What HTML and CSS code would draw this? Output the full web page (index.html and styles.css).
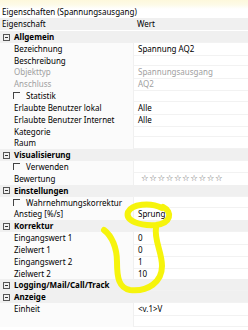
FILE: index.html
```html
<!DOCTYPE html>
<html>
<head>
<meta charset="utf-8">
<link rel="stylesheet" href="styles.css">
</head>
<body>
<div class="panel">
  <div class="title">Eigenschaften (Spannungsausgang)</div>
  <div class="head"><span class="c1">Eigenschaft</span><span class="c2">Wert</span></div>
  <div class="gap"></div>
  <div class="grid">
    <div class="row group"><div class="k"><span class="box"></span>Allgemein</div><div class="v"></div></div>
    <div class="row"><div class="k">Bezeichnung</div><div class="v">Spannung AQ2</div></div>
    <div class="row"><div class="k">Beschreibung</div><div class="v"></div></div>
    <div class="row dis"><div class="k">Objekttyp</div><div class="v">Spannungsausgang</div></div>
    <div class="row dis"><div class="k">Anschluss</div><div class="v">AQ2</div></div>
    <div class="row"><div class="k chk"><span class="cb"></span>Statistik</div><div class="v"></div></div>
    <div class="row"><div class="k">Erlaubte Benutzer lokal</div><div class="v">Alle</div></div>
    <div class="row"><div class="k">Erlaubte Benutzer Internet</div><div class="v">Alle</div></div>
    <div class="row"><div class="k">Kategorie</div><div class="v"></div></div>
    <div class="row"><div class="k">Raum</div><div class="v"></div></div>
    <div class="row group"><div class="k"><span class="box"></span>Visualisierung</div><div class="v"></div></div>
    <div class="row"><div class="k chk"><span class="cb"></span>Verwenden</div><div class="v"></div></div>
    <div class="row"><div class="k">Bewertung</div><div class="v stars">☆☆☆☆☆☆☆☆☆☆</div></div>
    <div class="row group"><div class="k"><span class="box"></span>Einstellungen</div><div class="v"></div></div>
    <div class="row"><div class="k chk"><span class="cb"></span>Wahrnehmungskorrektur</div><div class="v"></div></div>
    <div class="row"><div class="k">Anstieg [%/s]</div><div class="v">Sprung</div></div>
    <div class="row group"><div class="k"><span class="box"></span>Korrektur</div><div class="v"></div></div>
    <div class="row"><div class="k">Eingangswert 1</div><div class="v">0</div></div>
    <div class="row"><div class="k">Zielwert 1</div><div class="v">0</div></div>
    <div class="row"><div class="k">Eingangswert 2</div><div class="v">1</div></div>
    <div class="row"><div class="k">Zielwert 2</div><div class="v">10</div></div>
    <div class="row group"><div class="k"><span class="box"></span>Logging/Mail/Call/Track</div><div class="v"></div></div>
    <div class="row group"><div class="k"><span class="box"></span>Anzeige</div><div class="v"></div></div>
    <div class="row"><div class="k">Einheit</div><div class="v">&lt;v.1&gt;V</div></div>
    <div class="row"><div class="k"></div><div class="v"></div></div>
  </div>
  <svg class="marker" width="248" height="330" viewBox="0 0 248 330">
    <path d="M162 208 C150 202 132 204 128 212 C125 221 140 226 156 225 C171 223 173 212 163 207" fill="none" stroke="#f6f40c" stroke-width="6" stroke-linecap="round"/>
    <path d="M156 228 C154 240 162 252 162 266 C162 282 148 292 130 290 C119 288 117 278 117 262 C117 248 112 236 104 230" fill="none" stroke="#f6f40c" stroke-width="6" stroke-linecap="round"/>
  </svg>
</div>
</body>
</html>
```
FILE: styles.css
```css
html, body {
  margin: 0;
  padding: 0;
  background: #ffffff;
}
.panel {
  position: relative;
  width: 248px;
  height: 330px;
  overflow: hidden;
  font-family: "Noto Sans", "Open Sans", sans-serif;
  font-size: 8px;
  color: #000;
  background: #fff;
}
.title {
  height: 18px;
  line-height: 24px;
  padding-left: 2px;
  background: linear-gradient(#fdf8dc 0, #fdfbe9 5px, #ffffff 9px);
}
.head {
  display: flex;
  height: 12px;
  line-height: 12px;
  background: #f0f0f0;
}
.head .c1 {
  width: 131px;
  padding-left: 2px;
}
.head .c2 {
  padding-left: 4px;
}
.gap {
  height: 1px;
  background: #fff;
}
.grid {
  display: flex;
  flex-direction: column;
}
.row {
  display: grid;
  grid-template-columns: 133px 1fr;
  height: 11.83px;
  line-height: 11.83px;
}
.row .k {
  padding-left: 14px;
  white-space: nowrap;
  position: relative;
  background: #fbfbfb;
}
.row .v {
  padding-left: 4px;
  border-left: 1px solid #f0f0f0;
  border-bottom: 1px solid #f2f2f2;
  box-sizing: border-box;
  white-space: nowrap;
}
.row.group .k, .row.group .v {
  background: #f0f0f0;
  font-weight: bold;
}
.row.dis {
  color: #a0a0a0;
}
.k.chk {
  padding-left: 26px;
}
.box {
  position: absolute;
  left: 3px;
  top: 2.5px;
  width: 5px;
  height: 5px;
  border: 1px solid #555;
}
.box::after {
  content: "";
  position: absolute;
  left: 1px;
  top: 2px;
  width: 3px;
  height: 1px;
  background: #333;
}
.cb {
  position: absolute;
  left: 13px;
  top: 2px;
  width: 6px;
  height: 6px;
  border-top: 1px solid #444;
  border-left: 1px solid #444;
}
.v.stars {
  font-family: "DejaVu Sans", sans-serif;
  font-size: 8.5px;
  color: #666;
  letter-spacing: 0.6px;
  padding-left: 7px;
}
.marker {
  position: absolute;
  left: 0;
  top: 0;
  pointer-events: none;
}
```
